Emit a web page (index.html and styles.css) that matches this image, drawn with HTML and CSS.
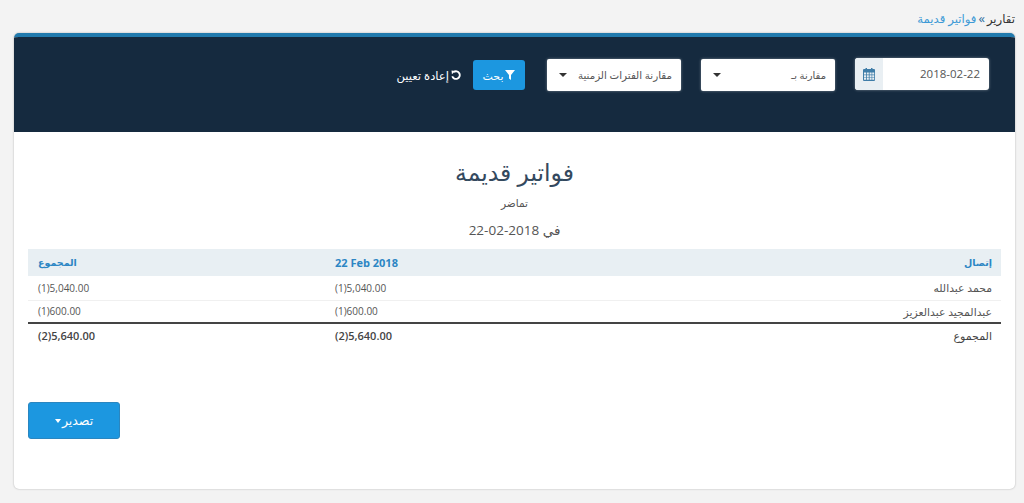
FILE: index.html
```html
<!DOCTYPE html>
<html lang="ar" dir="rtl">

<head>
    <meta charset="UTF-8">
    <title>فواتير قديمة</title>
    <link rel="stylesheet" href="styles.css">
</head>

<body>
    <div class="breadcrumb">
        <span>تقارير</span>
        <span class="crumb-sep">»</span>
        <a href="#">فواتير قديمة</a>
    </div>

    <div class="card">
        <div class="filter-bar">
            <div class="date-field">
                <span class="date-value">2018-02-22</span>
                <span class="date-addon">
                    <svg width="12" height="14" viewBox="0 0 12 14">
                        <path fill="#3f7da8" d="M1 2h1.5V1h1.5v1h4V1h1.5v1H11a1 1 0 0 1 1 1v10a1 1 0 0 1-1 1H1a1 1 0 0 1-1-1V3a1 1 0 0 1 1-1z" />
                        <path fill="#e9eff3" d="M1 5.5h2v2H1zM3.8 5.5h2v2h-2zM6.6 5.5h2v2h-2zM9.2 5.5h2v2h-2zM1 8.2h2v2H1zM3.8 8.2h2v2h-2zM6.6 8.2h2v2h-2zM9.2 8.2h2v2h-2zM1 10.8h2v2H1zM3.8 10.8h2v2h-2zM6.6 10.8h2v2h-2zM9.2 10.8h2v2h-2z" />
                    </svg>
                </span>
            </div>
            <div class="select-box">
                <span>مقارنة بـ</span>
                <span class="caret"></span>
            </div>
            <div class="select-box select-wide">
                <span>مقارنة الفترات الزمنية</span>
                <span class="caret"></span>
            </div>
            <button class="btn btn-search" type="button">
                <svg width="10" height="10" viewBox="0 0 10 10">
                    <path fill="#fff" d="M0 0h10L6 5v5L4 8.5V5z" />
                </svg>
                بحث
            </button>
            <a class="reset-link" href="#">
                <svg width="10" height="10" viewBox="0 0 11 11">
                    <path fill="none" stroke="#fff" stroke-width="2" d="M3 2.2a4.2 4.2 0 1 1-1.6 4.6" />
                    <path fill="#fff" d="M0.6 0.6l4.2 0.4-3.8 3.6z" />
                </svg>
                إعادة تعيين
            </a>
        </div>

        <div class="report-head">
            <h1>فواتير قديمة</h1>
            <p class="report-company">تماضر</p>
            <p class="report-date">في 2018-02-22</p>
        </div>

        <table class="report-table">
            <thead>
                <tr>
                    <th>إتصال</th>
                    <th class="num date-col"><bdi>22 Feb 2018</bdi></th>
                    <th class="num">المجموع</th>
                </tr>
            </thead>
            <tbody>
                <tr>
                    <td>محمد عبدالله</td>
                    <td class="num"><bdi>(1)5,040.00</bdi></td>
                    <td class="num"><bdi>(1)5,040.00</bdi></td>
                </tr>
                <tr class="row-last">
                    <td>عبدالمجيد عبدالعزيز</td>
                    <td class="num"><bdi>(1)600.00</bdi></td>
                    <td class="num"><bdi>(1)600.00</bdi></td>
                </tr>
            </tbody>
            <tfoot>
                <tr>
                    <td>المجموع</td>
                    <td class="num"><bdi>(2)5,640.00</bdi></td>
                    <td class="num"><bdi>(2)5,640.00</bdi></td>
                </tr>
            </tfoot>
        </table>

        <div class="export-row">
            <button class="btn btn-export" type="button">
                تصدير
                <span class="caret caret-white"></span>
            </button>
        </div>
    </div>
</body>

</html>
```

FILE: styles.css
```css
* {
    box-sizing: border-box;
}

html,
body {
    height: 503px;
    overflow: hidden;
}

body {
    margin: 0;
    padding: 0 9px 14px 14px;
    font-family: "Open Sans", "DejaVu Sans", sans-serif;
    background-color: #f3f3f3;
    color: #555;
    display: flex;
    flex-direction: column;
}

a {
    text-decoration: none;
}

.breadcrumb {
    height: 33px;
    padding: 3px 0 0 0;
    display: flex;
    align-items: center;
    align-self: flex-start;
    gap: 2px;
    font-size: 11.7px;
    line-height: 14px;
    color: #333;
}

.breadcrumb a {
    color: #3d9ad6;
}

.crumb-sep {
    color: #2c6e9e;
    font-size: 13px;
}

.card {
    flex: 1;
    background-color: #fff;
    border-top: 4px solid #217aad;
    border-radius: 5px;
    box-shadow: 0 0 2px rgba(0, 0, 0, 0.3);
    overflow: hidden;
    display: flex;
    flex-direction: column;
}

.filter-bar {
    height: 95px;
    flex-shrink: 0;
    background-color: #152a3f;
    padding: 21px 26px 0 0;
    display: flex;
    align-items: flex-start;
    gap: 20px;
    font-size: 10px;
}

.date-field {
    width: 134px;
    height: 32px;
    display: flex;
    justify-content: space-between;
    background-color: #fff;
    border-radius: 3px;
    overflow: hidden;
    box-shadow: 0 0 3px rgba(255, 255, 255, 0.4);
    color: #555;
}

.date-value {
    padding: 0 9px;
    line-height: 32px;
    font-size: 11.5px;
}

.date-addon {
    width: 28px;
    background-color: #e9eff3;
    display: flex;
    align-items: center;
    justify-content: center;
}

.select-box {
    width: 134px;
    height: 32px;
    margin-top: 1px;
    padding: 0 9px 0 12px;
    display: flex;
    align-items: center;
    justify-content: space-between;
    background-color: #fff;
    border-radius: 2px;
    box-shadow: 0 0 3px rgba(255, 255, 255, 0.4);
    color: #555;
    white-space: nowrap;
}

.select-wide {
    font-size: 10.3px;
}

.caret {
    width: 0;
    height: 0;
    border-top: 4px solid #333;
    border-left: 4px solid transparent;
    border-right: 4px solid transparent;
}

.caret-white {
    border-top-color: #fff;
    border-left-width: 3.5px;
    border-right-width: 3.5px;
}

.btn {
    border: none;
    border-radius: 3px;
    background-color: #1c97e0;
    color: #fff;
    font-family: inherit;
    display: flex;
    align-items: center;
    justify-content: center;
}

.btn-search {
    width: 52px;
    height: 30px;
    margin-top: 2px;
    margin-right: 2px;
    gap: 2px;
    font-size: 11px;
}

.reset-link {
    height: 30px;
    margin-top: 2px;
    margin-right: -8px;
    display: flex;
    align-items: center;
    gap: 2px;
    color: #fff;
    font-size: 11.6px;
    white-space: nowrap;
}

.report-head {
    padding-top: 25px;
    text-align: center;
}

.report-head h1 {
    margin: 0;
    font-size: 23.5px;
    line-height: 30px;
    font-weight: normal;
    color: #34495e;
}

.report-company {
    margin: 8px 0 0;
    font-size: 10.5px;
    line-height: 16px;
    color: #555;
}

.report-date {
    margin: 11px 0 0;
    font-size: 13.5px;
    line-height: 16px;
    color: #555;
}

.report-table {
    margin: 11px 14px 0 0;
    width: 973px;
    flex-shrink: 0;
    border-collapse: collapse;
    table-layout: fixed;
    font-size: 10.8px;
    color: #555;
}

.report-table th,
.report-table td {
    padding: 0 9px 0 10px;
    text-align: right;
    width: 379px;
}

.report-table th.num,
.report-table td.num {
    width: 297px;
    text-align: left;
    padding-left: 10px;
    font-size: 10px;
}

.report-table th {
    height: 27px;
    background-color: #e8eff3;
    color: #2c86c4;
    font-size: 9.5px;
    font-weight: bold;
}

.report-table th.date-col {
    font-size: 11px;
}

.report-table th.num:last-child {
    font-size: 9.5px;
}

.report-table tbody td {
    height: 24px;
    border-bottom: 1px solid #f0f0f0;
}

.report-table .row-last td {
    height: 23px;
    border-bottom: none;
}

.report-table tfoot td {
    height: 24px;
    border-top: 2px solid #444;
    font-size: 11px;
    color: #444;
}

.report-table tfoot td.num {
    font-size: 11px;
    font-weight: 600;
}

.export-row {
    padding: 55px 0 0;
    display: flex;
    justify-content: flex-end;
    margin-left: 14px;
}

.btn-export {
    width: 92px;
    height: 37px;
    gap: 1px;
    font-size: 12.5px;
    border: 1px solid #2a86c0;
}
```
